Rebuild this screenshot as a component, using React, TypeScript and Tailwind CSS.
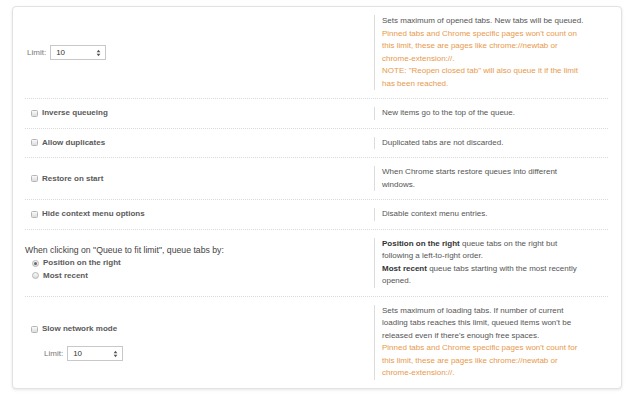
import React from "react";

const font = { fontFamily: '"Liberation Sans", Arial, sans-serif' };

function Checkbox() {
  return (
    <span className="inline-block w-[7px] h-[7px] rounded-[1.5px] border border-[#b5b5b5] bg-gradient-to-b from-[#fafafa] to-[#dcdcdc] ml-[6px] mr-[4px] shrink-0" />
  );
}

function Radio({ checked }: { checked?: boolean }) {
  return (
    <span className="inline-flex items-center justify-center w-[7px] h-[7px] rounded-full border border-[#b5b5b5] bg-gradient-to-b from-[#fafafa] to-[#dcdcdc] ml-[7px] mr-[4px] shrink-0">
      {checked && <span className="block w-[3px] h-[3px] rounded-full bg-[#666]" />}
    </span>
  );
}

function NumberBox() {
  return (
    <div className="flex items-center w-[56px] h-[15px] border border-[#c8c8c8] bg-white pl-[5px] pr-[4px]">
      <span className="flex-1 text-[8px] text-[#333]">10</span>
      <svg width="5" height="8" viewBox="0 0 5 8">
        <path d="M2.5 0.8 L4.4 3.2 L0.6 3.2 Z" fill="#555" />
        <path d="M2.5 7.2 L4.4 4.8 L0.6 4.8 Z" fill="#555" />
      </svg>
    </div>
  );
}

function Row({
  left,
  right,
  last,
}: {
  left: React.ReactNode;
  right: React.ReactNode;
  last?: boolean;
}) {
  return (
    <div
      className={
        "flex py-2 " + (last ? "" : "border-b border-dotted border-[#dadada]")
      }
    >
      <div className="w-[349px] flex items-center">{left}</div>
      <div className="border-l border-[#dcdcdc] pl-[7px] w-[233px]">
        <div className="w-[206px] text-[8px] leading-[12.5px] text-[#555]">{right}</div>
      </div>
    </div>
  );
}

function CheckLabel({ children }: { children: React.ReactNode }) {
  return (
    <div className="flex items-center">
      <Checkbox />
      <span className="text-[8px] font-bold text-[#5a5a5a]">{children}</span>
    </div>
  );
}

const orange = "text-[#e8994b]";

export default function App() {
  return (
    <div className="w-[640px] h-[402px] bg-white pt-[6px] pl-3" style={font}>
      <div className="w-[610px] rounded-[4px] border border-[#e2e2e2] shadow-[0_1px_3px_rgba(0,0,0,0.1)] bg-white pl-3 pr-[13px]">
        <Row
          left={
            <div className="flex items-center ml-[2px]">
              <span className="text-[8px] text-[#777] mr-[4px]">Limit:</span>
              <NumberBox />
            </div>
          }
          right={
            <>
              <div>Sets maximum of opened tabs. New tabs will be queued.</div>
              <div className={orange}>
                Pinned tabs and Chrome specific pages won't count on this limit, these are pages like chrome://newtab or chrome-extension://.
              </div>
              <div className={orange}>
                NOTE: "Reopen closed tab" will also queue it if the limit has been reached.
              </div>
            </>
          }
        />
        <Row left={<CheckLabel>Inverse queueing</CheckLabel>} right={<div>New items go to the top of the queue.</div>} />
        <Row left={<CheckLabel>Allow duplicates</CheckLabel>} right={<div>Duplicated tabs are not discarded.</div>} />
        <Row
          left={<CheckLabel>Restore on start</CheckLabel>}
          right={<div>When Chrome starts restore queues into different windows.</div>}
        />
        <Row
          left={<CheckLabel>Hide context menu options</CheckLabel>}
          right={<div>Disable context menu entries.</div>}
        />
        <Row
          left={
            <div className="flex flex-col">
              <div className="text-[8.7px] leading-[13px] text-[#444]">
                When clicking on "Queue to fit limit", queue tabs by:
              </div>
              <div className="flex items-center h-[13px]">
                <Radio checked />
                <span className="text-[8px] font-bold text-[#5a5a5a]">Position on the right</span>
              </div>
              <div className="flex items-center h-[12px]">
                <Radio />
                <span className="text-[8px] font-bold text-[#5a5a5a]">Most recent</span>
              </div>
            </div>
          }
          right={
            <>
              <div>
                <b className="text-[#333]">Position on the right</b> queue tabs on the right but following a left-to-right order.
              </div>
              <div>
                <b className="text-[#333]">Most recent</b> queue tabs starting with the most recently opened.
              </div>
            </>
          }
        />
        <Row
          last
          left={
            <div className="flex flex-col">
              <CheckLabel>Slow network mode</CheckLabel>
              <div className="flex items-center mt-[11px] ml-[19px]">
                <span className="text-[8px] text-[#777] mr-[4px]">Limit:</span>
                <NumberBox />
              </div>
            </div>
          }
          right={
            <>
              <div>
                Sets maximum of loading tabs. If number of current loading tabs reaches this limit, queued items won't be released even if there's enough free spaces.
              </div>
              <div className={orange}>
                Pinned tabs and Chrome specific pages won't count for this limit, these are pages like chrome://newtab or chrome-extension://.
              </div>
            </>
          }
        />
      </div>
    </div>
  );
}
